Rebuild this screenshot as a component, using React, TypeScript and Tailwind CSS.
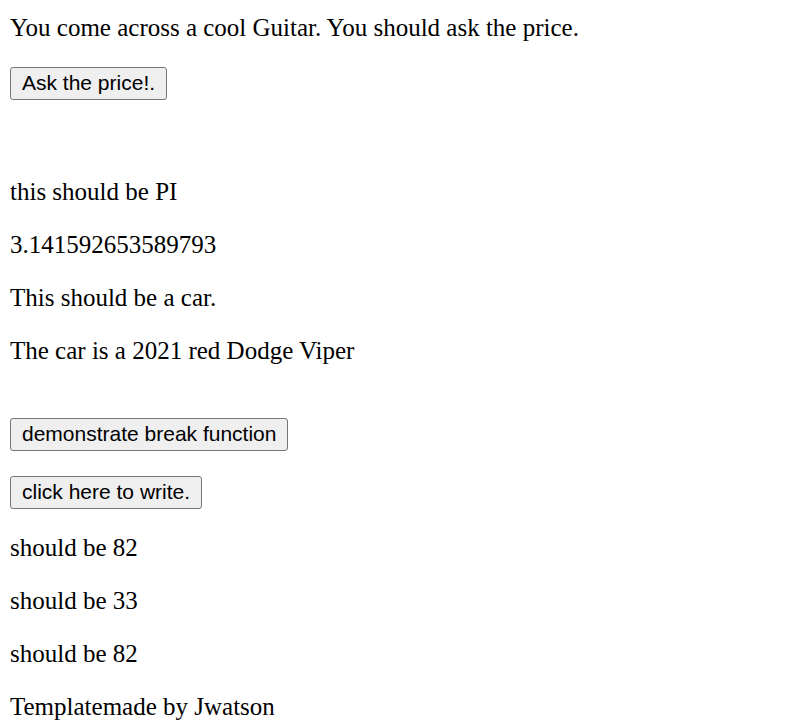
export default function App() {
  const serif = "font-['Liberation_Serif','Times_New_Roman',serif] text-[25px] leading-[30px] text-black";
  const btn =
    "h-[33px] self-start rounded-[3px] border border-[#767676] bg-[#efefef] px-[11px] pb-[2px] font-['Liberation_Sans',Arial,sans-serif] text-[21px] leading-[24px] text-black";

  return (
    <div className="flex min-h-[726px] flex-col bg-white px-[10px] pt-[13px]">
      <p className={serif}>You come across a cool Guitar. You should ask the price.</p>
      <button className={`${btn} mt-[24px]`}>Ask the price!.</button>

      <p className={`${serif} mt-[77px]`}>this should be PI</p>
      <p className={`${serif} mt-[23px]`}>3.141592653589793</p>
      <p className={`${serif} mt-[23px]`}>This should be a car.</p>
      <p className={`${serif} mt-[23px]`}>The car is a 2021 red Dodge Viper</p>

      <button className={`${btn} mt-[52px]`}>demonstrate break function</button>
      <button className={`${btn} mt-[25px]`}>click here to write.</button>

      <p className={`${serif} mt-[24px]`}>should be 82</p>
      <p className={`${serif} mt-[23px]`}>should be 33</p>
      <p className={`${serif} mt-[23px]`}>should be 82</p>
      <p className={`${serif} mt-[23px]`}>Templatemade by Jwatson</p>
    </div>
  );
}
